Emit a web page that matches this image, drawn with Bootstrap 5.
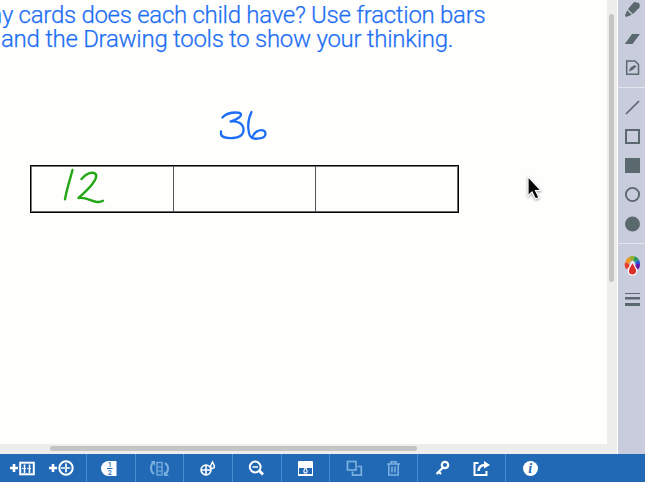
<!DOCTYPE html>
<html lang="en">
<head>
<meta charset="utf-8">
<meta name="viewport" content="width=device-width, initial-scale=1">
<title>Fraction Bars</title>
<link href="https://cdn.jsdelivr.net/npm/bootstrap@5.3.0/dist/css/bootstrap.min.css" rel="stylesheet">
<style>
body{height:100vh;background:#fefefd;font-family:Roboto,"Liberation Sans",sans-serif}
.board{background:#fefefd;min-width:0}
.prompt{color:#1c6ef5;font-weight:300;font-size:24px;line-height:24px;padding-top:3px;white-space:nowrap;letter-spacing:-.28px;-webkit-text-stroke:.25px #1c6ef5}
.prompt .line-a{margin-left:-11px}
.prompt .line-b{margin-left:1px}
.figure-area{padding:55px 0 0 30px}
.total{height:59px;padding-left:187px}
.bar{width:429px;height:48px;border:1px solid #050505;box-shadow:inset 1px 1px 0 #777,inset -1px -1px 0 #666}
.bar>div+div{border-left:1px solid #555}
.pointer{left:523px;top:172px}
.track{background:#ededec}
.track-y{width:11px;border-right:1px solid #fff;padding:14px 2px 0}
.track-y>div{width:5px;height:268px;background:#c4c4c3;border-radius:3px}
.track-x{height:10px;padding:2px 0 0 50px}
.track-x>div{width:367px;height:5px;background:#c4c4c3;border-radius:3px}
.tools{width:27px;background:#c9ccdd;color:#5a696d}
.tools .slot{height:29px;padding-left:6px}
.tools .first{height:24px}
.tools .group{border-top:1px solid #e4e5ed}
.tools .g-one{height:87px}.tools .g-two{height:156px;padding-top:5px}.tools .g-three{padding-top:4px}
.tools .g-three .slot{height:34px}
.dock{height:28px;background:#2269b5;color:#fff}
.dock>div{border-right:1px solid #4590d0}
.w1{width:87px;padding-right:2px}.w2{width:48.7px}.w3{width:88px}
.dim{color:#7ab0df}
svg{display:block;flex:none}
</style>
<script src="https://cdn.jsdelivr.net/npm/bootstrap@5.3.0/dist/js/bootstrap.bundle.min.js"></script>
</head>
<body class="d-flex flex-column overflow-hidden">
<div class="d-flex flex-grow-1 overflow-hidden">
  <main class="board d-flex flex-column flex-grow-1 overflow-hidden position-relative">
    <div class="flex-grow-1 overflow-hidden">
      <div class="prompt"><div class="line-a">ny cards does each child have? Use fraction bars</div><div class="line-b">and the Drawing tools to show your thinking.</div></div>
      <div class="figure-area">
        <div class="total"><svg width="52" height="36" viewBox="217 106 52 36" fill="none" stroke="#1c6ef5" stroke-width="2.3" stroke-linecap="round" stroke-linejoin="round" role="img" aria-label="36"><path d="M222.500 117.500C226 113.500 231 112.500 236 112.500C241.500 112.500 242.500 115 239 117.500C236.500 119.500 233.500 120.500 230.500 121.500C237 120.500 243 123.500 243.500 129C244 135 239 138 233 138C227 138.500 222 137 221 134.500V131.500M251.500 112C248.500 118 247.500 126 249 133C250 138 252.500 139 257 138.700C262 138.500 265.500 137.500 265.500 134C265.500 130.500 262 129.500 259 130.500C255.500 131.500 253 135 252 138"/></svg></div>
        <div class="bar d-flex">
          <div class="flex-fill w-100"><svg width="50" height="42" viewBox="61 165 50 42" style="margin-left:30px" fill="none" stroke="#22a716" stroke-width="2.4" stroke-linecap="round" stroke-linejoin="round" role="img" aria-label="12"><path d="M72.500 169C70.500 177 67 187 65 198.200M81.500 178C85 174 90 171 94 172C98.500 173.500 95.500 179 92 183.500C88 188.500 83 193 78.500 197C86 196 91 200 96 200.800C99 201.200 101 201 103 199.800"/></svg></div>
          <div class="flex-fill w-100"></div><div class="flex-fill w-100"></div>
        </div>
      </div>
    </div>
    <div class="track track-x"><div></div></div>
    <svg class="pointer position-absolute" width="20" height="30" viewBox="523 172 20 30"><path d="M528 176.500V196L532 192L535.500 199L539 197.500L535.500 190.500H541Z" fill="#080808" stroke="#fff" stroke-width="1.200" style="filter:drop-shadow(0 1px 1px #999)"/></svg>
  </main>
  <div class="track track-y"><div></div></div>
  <aside class="tools d-flex flex-column">
    <div class="g-one">
      <div class="slot first"><svg width="17" height="18" viewBox="0 0 17 18"><path d="M10 2L15 3Q17 7 14 9L9 14L4 9Z" fill="currentColor"/><path d="M3.500 9.500L8.500 14.500L2 17L1 15.500Z" fill="currentColor"/><path d="M3 9.500L8.500 15" stroke="#dce5ef"/></svg></div>
      <div class="slot d-flex align-items-center"><svg width="17" height="12" viewBox="0 0 17 12"><path d="M8 1H16L8.500 11H.8Z" fill="currentColor"/></svg></div>
      <div class="slot d-flex align-items-center"><svg width="17" height="17" viewBox="0 0 17 17"><path d="M2.700 2H11L14.500 5.500V15.300H2.700Z" fill="none" stroke="currentColor" stroke-width="1.500"/><path d="M5 12.500L6 9L10.500 6L12.500 7.500L8.500 11Z" fill="currentColor"/></svg></div>
    </div>
    <div class="group g-two">
      <div class="slot d-flex align-items-center"><svg width="17" height="17" viewBox="0 0 17 17"><path d="M2 15L15 2" stroke="currentColor" stroke-width="1.700"/></svg></div>
      <div class="slot d-flex align-items-center"><svg width="17" height="17" viewBox="0 0 17 17"><rect x="2" y="2" width="13" height="13" fill="none" stroke="currentColor" stroke-width="2"/></svg></div>
      <div class="slot d-flex align-items-center"><svg width="17" height="17" viewBox="0 0 17 17"><rect x="1" y="1" width="15" height="15" fill="currentColor"/></svg></div>
      <div class="slot d-flex align-items-center"><svg width="17" height="17" viewBox="0 0 17 17"><circle cx="8.500" cy="8.500" r="6.600" fill="none" stroke="currentColor" stroke-width="1.900"/></svg></div>
      <div class="slot d-flex align-items-center"><svg width="17" height="17" viewBox="0 0 17 17"><circle cx="8.500" cy="9" r="7.500" fill="currentColor"/></svg></div>
    </div>
    <div class="group g-three">
      <div class="slot d-flex align-items-center"><svg width="17" height="21" viewBox="0 0 17 21" fill="none" stroke-width="4.500"><path d="M4 13A5.400 5.400 0 0 1 3.300 8" stroke="#e83b2e"/><path d="M3.300 8A5.500 5.500 0 0 1 6 4" stroke="#f39420"/><path d="M6 4A5.500 5.500 0 0 1 10 3.500" stroke="#9cab2c"/><path d="M10 3.500A5.500 5.500 0 0 1 13 6" stroke="#259a59"/><path d="M13 6A5.500 5.500 0 0 1 13.800 9" stroke="#2857d8"/><path d="M13.800 9A5.500 5.500 0 0 1 12.500 13" stroke="#6518a5"/><path d="M8.500 7C6.500 11 4.300 13 4.300 16A4.200 4.200 0 0 0 12.700 16C12.700 13 10.500 11 8.500 7Z" fill="#de302b" stroke="#fff" stroke-width="1.200"/></svg></div>
      <div class="slot d-flex align-items-center"><svg width="17" height="17" viewBox="0 0 17 17" fill="currentColor"><path d="M1 2H16V3H1ZM1 6H16V8.500H1ZM1 12H16V15H1Z"/></svg></div>
    </div>
  </aside>
</div>
<footer class="dock d-flex flex-shrink-0">
  <div class="w1 d-flex align-items-center justify-content-center flex-shrink-0" style="gap:14px">
    <svg width="25" height="16" viewBox="0 0 25 16" fill="none" stroke="currentColor"><path d="M0 8H8M4 4V12" stroke-width="2.600"/><rect x="10.200" y="2.700" width="13.600" height="11.600" stroke-width="2"/><path d="M14.500 4.500V13M19.500 4.500V13" stroke-width="1.600"/><path d="M12 8.500H22" stroke-dasharray="1.500 1"/></svg>
    <svg width="25" height="16" viewBox="0 0 25 16" fill="none" stroke="currentColor"><path d="M0 8H8M4 4V12" stroke-width="2.600"/><circle cx="17" cy="8" r="6.700" stroke-width="2"/><path d="M12 8H22M17 3.500V12.500" stroke-width="1.700" stroke-dasharray="4 .8"/></svg>
  </div>
  <div class="w2 d-flex align-items-center justify-content-center flex-shrink-0 pe-1"><svg width="17" height="17" viewBox="0 0 17 17"><path d="M8.500 1H16.500V16H8.500A7.500 7.500 0 0 1 8.500 1Z" fill="currentColor"/><g fill="#2269b5" font-family="Roboto,sans-serif" font-size="7" font-weight="500" text-anchor="middle"><text x="9.700" y="7.300">1</text><text x="9.700" y="14.800">2</text></g><path d="M7 8.500H12.500" stroke="#2269b5"/></svg></div>
  <div class="w2 dim d-flex align-items-center justify-content-center flex-shrink-0"><svg width="21" height="17" viewBox="0 0 21 17" fill="none" stroke="currentColor"><rect x="8" y="2.500" width="5" height="12.500" stroke-width="1.300"/><path d="M8 7H13M8 11H13"/><path d="M6 2Q2 3 2 8Q2 12 5 14M15 15Q19 13 19 8Q19 5 16 3" stroke-width="2"/><path d="M2 1H6V6ZM15 11V16H20Z" fill="currentColor" stroke="none"/></svg></div>
  <div class="w2 d-flex align-items-center justify-content-center flex-shrink-0"><svg width="17" height="17" viewBox="0 0 17 17" fill="none" stroke="currentColor"><circle cx="6" cy="10" r="4.900" stroke-width="1.700"/><path d="M1 10H11M6 5V15" stroke-width="1.600"/><path d="M12.500 2L10.800 5.500Q10.200 8.300 12.500 8.500Q14.900 8.300 14.200 5.500Z" fill="#2269b5" stroke-width="1.500"/></svg></div>
  <div class="w2 d-flex align-items-center justify-content-center flex-shrink-0"><svg width="17" height="17" viewBox="0 0 17 17" fill="none" stroke="currentColor"><circle cx="7.200" cy="7" r="5.400" stroke-width="2"/><path d="M4.500 7H10" stroke-width="1.500"/><path d="M11 10.500L15 14.500" stroke-width="2.900"/></svg></div>
  <div class="w2 d-flex align-items-center justify-content-center flex-shrink-0"><svg width="17" height="17" viewBox="0 0 17 17"><path d="M1 2Q1 1 2 1H15Q16 1 16 2V16H1Z" fill="currentColor"/><path d="M2 8H15V14H2Z" fill="#2269b5"/><path d="M8.500 7.500L7 10.500Q6.500 13 8.500 13Q10.500 13 10 10.500Z" fill="#2269b5" stroke="currentColor" stroke-width="1.100"/></svg></div>
  <div class="w3 dim d-flex align-items-center justify-content-center flex-shrink-0" style="gap:22px">
    <svg width="17" height="17" viewBox="0 0 17 17" fill="none" stroke="currentColor" stroke-width="1.700"><rect x="1.500" y="1.500" width="8.500" height="8.500"/><path d="M11.500 6.500H15.300V15.200H6.500V11.500"/></svg>
    <svg width="17" height="17" viewBox="0 0 17 17" fill="none" stroke="currentColor" stroke-width="1.600"><path d="M2 4H15M6 3.500V1.700H11V3.500M3.800 4V15H13.200V4M7 6.500V12.500M10 6.500V12.500"/></svg>
  </div>
  <div class="w3 d-flex align-items-center justify-content-center flex-shrink-0" style="gap:22px">
    <svg width="17" height="17" viewBox="0 0 17 17" fill="none" stroke="currentColor" stroke-width="2.200"><circle cx="11" cy="5" r="3.200"/><path d="M9 7.500L2.500 14M4.500 11.500L7 14"/></svg>
    <svg width="17" height="17" viewBox="0 0 17 17" fill="none" stroke="currentColor" stroke-width="2"><path d="M5.500 3H1.500V15H13.500V11"/><path d="M5.500 11Q6 5 12 5" stroke-width="2.400"/><path d="M11 1L17 5L11 8.500Z" fill="currentColor" stroke="none"/></svg>
  </div>
  <div class="w2 border-0 d-flex align-items-center justify-content-center flex-shrink-0"><svg width="17" height="17" viewBox="0 0 17 17"><circle cx="8.500" cy="8.500" r="7.500" fill="currentColor"/><text x="8.200" y="13" text-anchor="middle" fill="#2269b5" font-family="Liberation Serif,serif" font-size="14" font-weight="700" font-style="italic">i</text></svg></div>
</footer>
</body>
</html>
